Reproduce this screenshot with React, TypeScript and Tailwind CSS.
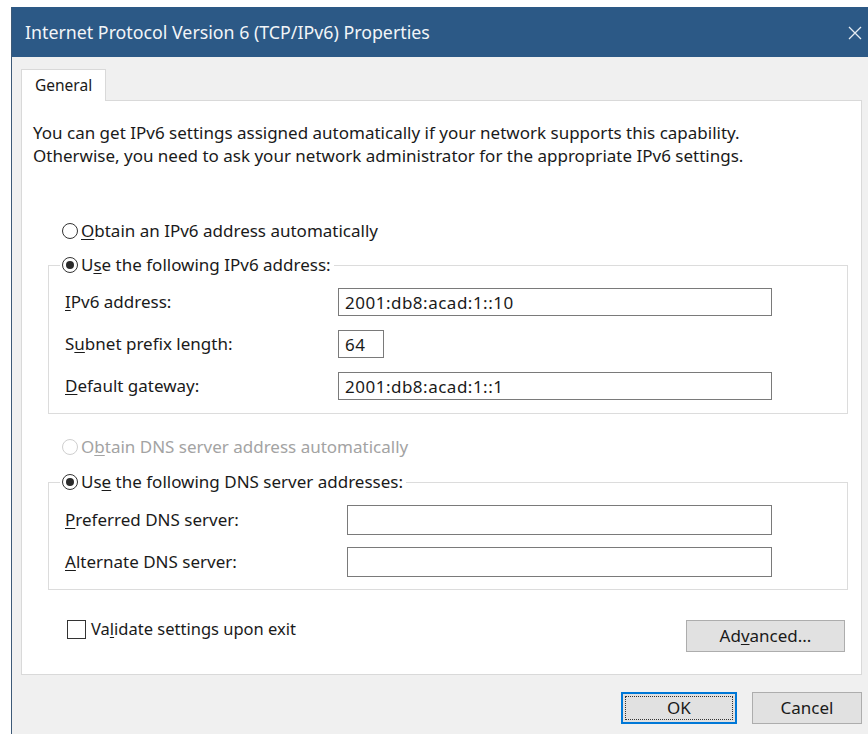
import React from "react";

type RadioProps = { checked?: boolean; disabled?: boolean };

function Radio({ checked = false, disabled = false }: RadioProps) {
  return (
    <span
      className={
        disabled
          ? "flex h-[16px] w-[16px] shrink-0 items-center justify-center rounded-full border border-[#cfcfcf] bg-white"
          : "flex h-[16px] w-[16px] shrink-0 items-center justify-center rounded-full border border-[#333333] bg-white"
      }
    >
      {checked && <span className="h-[8px] w-[8px] rounded-full bg-[#2a2a2a]" />}
    </span>
  );
}

function Key({ children }: { children: React.ReactNode }) {
  return <u className="underline decoration-1 underline-offset-[2px]">{children}</u>;
}

function Box({ value = "", className }: { value?: string; className: string }) {
  return (
    <div className={className}>
      <span className="pl-[6px] text-[17px] leading-none tracking-[0.5px]">{value}</span>
    </div>
  );
}

export default function App() {
  return (
    <div className="h-[734px] w-[868px] overflow-hidden bg-white font-['Noto_Sans',sans-serif] text-[17px] text-[#1a1a1a]">
      <div className="ml-[11px] mt-[7px] flex h-[727px] w-[857px] flex-col border-l border-[#3d5a78] bg-[#f0f0f0]">
        {/* caption bar */}
        <div className="flex h-[50px] shrink-0 items-center justify-between bg-[#2c5986] pl-[13px] pr-[6px]">
          <span className="text-[17.8px] text-[#f2f5f8]">Internet Protocol Version 6 (TCP/IPv6) Properties</span>
          <svg width="14" height="14" viewBox="0 0 14 14" className="mt-[1px]">
            <path d="M1 1 L13 13 M13 1 L1 13" stroke="#e6ecf2" strokeWidth="1.3" fill="none" />
          </svg>
        </div>

        {/* tab strip + page */}
        <div className="flex flex-col pl-[9px] pt-[12px]">
          <div className="relative z-10 -mb-[1px] flex h-[32px] w-[85px] items-center border-l border-r border-t border-[#d9d9d9] bg-white pl-[13px] text-[15.5px]">
            General
          </div>

          <div className="flex h-[575px] w-[841px] flex-col border border-[#d9d9d9] bg-white">
            <div className="pl-[11px] pt-[20px] leading-[23px]">
              <p>You can get IPv6 settings assigned automatically if your network supports this capability.</p>
              <p>Otherwise, you need to ask your network administrator for the appropriate IPv6 settings.</p>
            </div>

            <div className="ml-[40px] mt-[52px] flex h-[24px] items-center gap-[3px]">
              <Radio />
              <span>
                <Key>O</Key>btain an IPv6 address automatically
              </span>
            </div>

            <fieldset className="ml-[26px] mt-[10px] w-[800px] border border-[#dcdcdc] pb-[13px]">
              <legend className="ml-[11px] flex h-[24px] items-center gap-[3px] bg-white pl-[2px] pr-[3px]">
                <Radio checked />
                <span>
                  U<Key>s</Key>e the following IPv6 address:
                </span>
              </legend>
              <div className="mt-[11px] flex flex-col gap-[14px] pl-[16px]">
                <div className="flex h-[28px] items-center">
                  <span className="w-[273px]">
                    <Key>I</Key>Pv6 address:
                  </span>
                  <Box value="2001:db8:acad:1::10" className="flex h-[28px] w-[434px] items-center border border-[#7a7a7a] bg-white" />
                </div>
                <div className="flex h-[28px] items-center">
                  <span className="w-[273px]">
                    S<Key>u</Key>bnet prefix length:
                  </span>
                  <Box value="64" className="flex h-[28px] w-[46px] items-center border border-[#7a7a7a] bg-white" />
                </div>
                <div className="flex h-[28px] items-center">
                  <span className="w-[273px]">
                    <Key>D</Key>efault gateway:
                  </span>
                  <Box value="2001:db8:acad:1::1" className="flex h-[28px] w-[434px] items-center border border-[#7a7a7a] bg-white" />
                </div>
              </div>
            </fieldset>

            <div className="ml-[40px] mt-[21px] flex h-[24px] items-center gap-[3px] text-[#a3a3a3]">
              <Radio disabled />
              <span>
                O<Key>b</Key>tain DNS server address automatically
              </span>
            </div>

            <fieldset className="ml-[26px] mt-[11px] w-[800px] border border-[#dcdcdc] pb-[12px]">
              <legend className="ml-[11px] flex h-[24px] items-center gap-[3px] bg-white pl-[2px] pr-[3px]">
                <Radio checked />
                <span>
                  Us<Key>e</Key> the following DNS server addresses:
                </span>
              </legend>
              <div className="mt-[11px] flex flex-col gap-[12px] pl-[16px]">
                <div className="flex h-[30px] items-center">
                  <span className="w-[282px]">
                    <Key>P</Key>referred DNS server:
                  </span>
                  <Box className="flex h-[30px] w-[425px] items-center border border-[#7a7a7a] bg-white" />
                </div>
                <div className="flex h-[30px] items-center">
                  <span className="w-[282px]">
                    <Key>A</Key>lternate DNS server:
                  </span>
                  <Box className="flex h-[30px] w-[425px] items-center border border-[#7a7a7a] bg-white" />
                </div>
              </div>
            </fieldset>

            <div className="mt-[30px] flex items-start justify-between pl-[45px] pr-[16px]">
              <div className="flex h-[19px] items-center gap-[5px]">
                <span className="h-[19px] w-[19px] shrink-0 border border-[#333333] bg-white" />
                <span className="text-[16.5px]">
                  Va<Key>l</Key>idate settings upon exit
                </span>
              </div>
              <button className="flex h-[32px] w-[159px] items-center justify-center border border-[#adadad] bg-[#e1e1e1]">
                <span>
                  Ad<Key>v</Key>anced...
                </span>
              </button>
            </div>
          </div>
        </div>

        {/* dialog buttons */}
        <div className="mt-[17px] flex justify-end gap-[15px] pr-[6px]">
          <button className="flex h-[32px] w-[116px] items-center justify-center border-2 border-[#0078d7] bg-[#e1e1e1] p-[2px]">
            <span className="flex h-full w-full items-center justify-center border border-dotted border-[#333333]">OK</span>
          </button>
          <button className="flex h-[32px] w-[110px] items-center justify-center border border-[#adadad] bg-[#e1e1e1]">
            Cancel
          </button>
        </div>
      </div>
    </div>
  );
}
